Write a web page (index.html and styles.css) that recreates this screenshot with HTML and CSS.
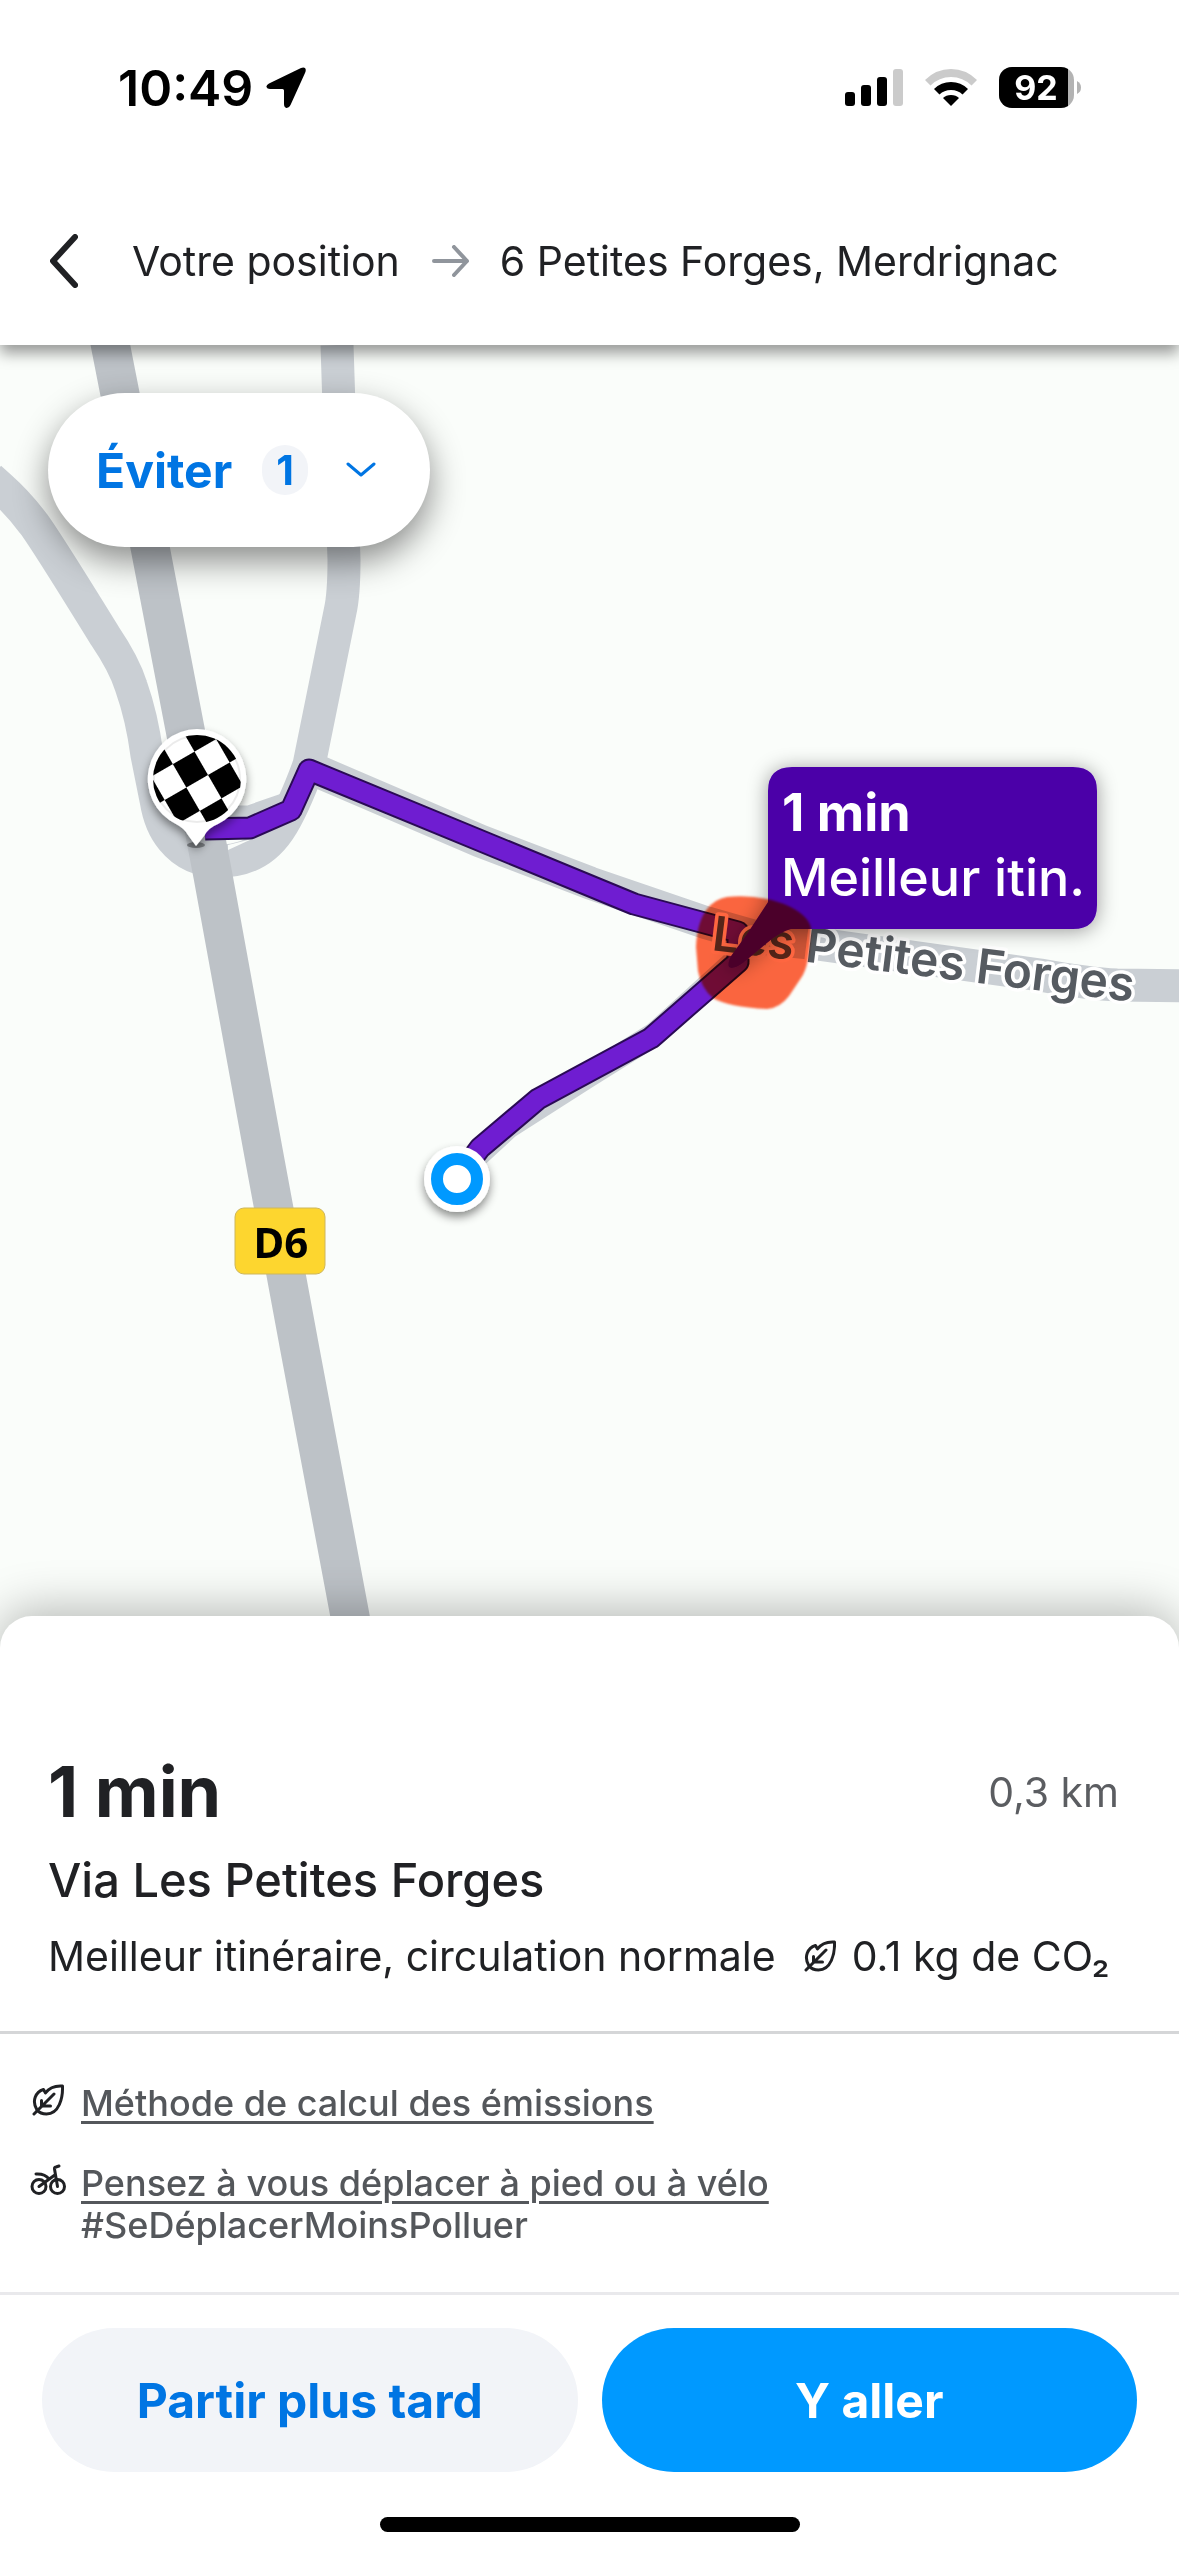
FILE: index.html
```html
<!DOCTYPE html>
<html lang="fr">
<head>
    <meta charset="UTF-8">
    <meta name="viewport" content="width=device-width, initial-scale=1.0">
    <title>Itinéraire - 6 Petites Forges, Merdrignac</title>
    <link rel="stylesheet" href="styles.css">
</head>
<body>
    <!-- Shared icons -->
    <svg class="icon-defs" aria-hidden="true">
        <symbol id="leaf" viewBox="0 0 32 32">
            <g fill="none" stroke="currentColor" stroke-width="3" stroke-linecap="round" stroke-linejoin="round">
                <path d="M2 30 L22 10 M9.500 16.500 V22.500 M10 22 H18.500"/>
                <path d="M5 26 C-.5 17 3.500 8 11.500 5.500 L13.500 9 C17 4 23 1.500 30.500 2 C31 14 27 30 14.500 30 C11 30 7.500 29 5 26 Z"/>
            </g>
        </symbol>
        <symbol id="bike" viewBox="0 0 36 32">
            <g fill="none" stroke="currentColor" stroke-width="3" stroke-linecap="round" stroke-linejoin="round">
                <circle cx="9" cy="22.500" r="7"/>
                <circle cx="27.500" cy="22.500" r="7"/>
                <path d="M9 22.500 L25.500 10.500 M27.500 22.500 L24.500 5 Q24.300 3.500 26 3 L29 2 M6 10 Q15 9.500 19 15"/>
            </g>
        </symbol>
    </svg>

    <header class="header">
        <div class="status-bar">
            <div class="status-time">
                <span>10:49</span>
                <svg width="40" height="42" viewBox="0 0 40 42" aria-hidden="true">
                    <path d="M35 1 L3 16.500 Q0 18 .5 20 Q1 22 4 22 H16.500 Q18 22 18 23.500 V37 Q18 40.500 20.500 41 Q23 41.200 24.500 38 L39 6 Q40.500 2.500 39 1 Q37.500 -.2 35 1 Z"/>
                </svg>
            </div>
            <div class="status-icons">
                <svg width="58" height="38" viewBox="0 0 58 38" aria-hidden="true">
                    <rect x="0" y="23" width="10" height="14" rx="3"/>
                    <rect x="16" y="16" width="10" height="21" rx="3"/>
                    <rect x="32" y="8" width="10" height="29" rx="3"/>
                    <rect x="48" y="0" width="10" height="37" rx="3" fill="#cbcbcb"/>
                </svg>
                <svg width="52" height="38" viewBox="0 0 52 38" aria-hidden="true">
                    <path d="M0 11 Q11 0 26 0 Q41 0 52 11 L46.500 16.500 Q38 8 26 8 Q14 8 5.500 16.500 Z" fill="#cbcbcb"/>
                    <path d="M9 20 Q16 13 26 13 Q36 13 43 20 L37.500 25.500 Q33 21 26 21 Q19 21 14.500 25.500 Z"/>
                    <path d="M18 29 Q21 26 26 26 Q31 26 34 29 L26 37 Z"/>
                </svg>
                <svg width="82" height="42" viewBox="0 0 82 42" role="img" aria-label="Batterie 92 %">
                    <clipPath id="level"><rect width="69" height="42"/></clipPath>
                    <rect width="75" height="41" rx="13" fill="#b3b3b3"/>
                    <rect width="75" height="41" rx="13" clip-path="url(#level)"/>
                    <path d="M78 14 Q82 16 82 20.500 Q82 25 78 27 Z" fill="#b3b3b3"/>
                    <text x="37" y="33" class="battery-text">92</text>
                </svg>
            </div>
        </div>
        <nav class="route-bar">
            <button class="back" aria-label="Retour">
                <svg width="28" height="54" viewBox="0 0 28 54" aria-hidden="true">
                    <path d="M25 3 L3 27 L25 51" fill="none" stroke="#202124" stroke-width="6" stroke-linecap="round" stroke-linejoin="round"/>
                </svg>
            </button>
            <span>Votre position</span>
            <svg class="route-arrow" width="38" height="32" viewBox="0 0 38 32" aria-hidden="true">
                <path d="M2 16 H35 M22 2 L35 16 L22 30" fill="none" stroke="#90959c" stroke-width="4" stroke-linecap="round" stroke-linejoin="round"/>
            </svg>
            <span>6 Petites Forges, Merdrignac</span>
        </nav>
    </header>

    <main class="map">
        <svg class="map-canvas" viewBox="0 345 1179 1315" preserveAspectRatio="xMidYMid slice">
            <defs>
                <pattern id="checker" width="50" height="54" patternUnits="userSpaceOnUse" patternTransform="translate(208 775) rotate(-30)">
                    <rect width="50" height="54" fill="#fff"/>
                    <rect width="25" height="27"/>
                    <rect x="25" y="27" width="25" height="27"/>
                </pattern>
                <filter id="pin-shadow" x="-30%" y="-30%" width="160%" height="160%">
                    <feDropShadow dx="0" dy="5" stdDeviation="5" flood-opacity=".45"/>
                </filter>
                <filter id="bubble-shadow" x="-20%" y="-30%" width="140%" height="160%">
                    <feDropShadow dx="0" dy="2" stdDeviation="10" flood-opacity=".4"/>
                </filter>
                <filter id="soft"><feGaussianBlur stdDeviation="1"/></filter>
            </defs>

            <!-- Small roads -->
            <g class="road">
                <path d="M-10 478 L0 487 Q18 503 33 523 Q42 534 105 636 Q124 664 131 686 Q142 717 147 755 L156 800 Q160 825 172 839 Q190 861 220 861 Q258 861 279 830 Q293 809 309 765 L340 612 Q344 595 344 560 L337 345"/>
                <path d="M190 822 H250 L290 808"/>
                <path d="M310 768 L480 841 L590 883 L707 923 L760 938 L810 943 L1040 975 Q1090 984 1117 985 L1190 986"/>
                <path class="road-thin" d="M742 955 L655 1034 L586 1077 L508 1127 L470 1162"/>
            </g>
            <path d="M228 845 L252 839 L228 850 Z" fill="#fafdfa"/>
            <!-- D6 -->
            <path class="road-main" d="M109 338 L150 547 L185 729 L213 876 L263 1150 L300 1350 L350 1616 L360 1670"/>

            <!-- Route -->
            <path class="route-edge" d="M205 829 L250 828 L291 810 L309 770 L634 904 L738 932 V962 L651 1038 L538 1099 L480 1148 L457 1179"/>
            <path class="route-line" d="M205 829 L250 828 L291 810 L309 770 L634 904 L738 932 V962 L651 1038 L538 1099 L480 1148 L457 1179"/>

            <text class="road-label" transform="translate(711 950) rotate(7)">Les Petites Forges</text>

            <g>
                <rect x="235" y="1208" width="90" height="66" rx="9" fill="#fdd62f" stroke="#cdb65c"/>
                <text class="road-number" x="281" y="1258">D6</text>
            </g>

            <!-- Best route bubble -->
            <g filter="url(#bubble-shadow)">
                <path class="bubble" d="M792 767 H1073 Q1097 767 1097 791 V905 Q1097 929 1073 929 H791 Q780 932 767 943 L743 963 Q733 970 729 967 Q727 964 731 956 L747 934 L768 902 V791 Q768 767 792 767 Z"/>
            </g>
            <text class="bubble-time" x="782" y="831">1 min</text>
            <text class="bubble-text" x="781" y="896">Meilleur itin.</text>

            <!-- Highlighted junction -->
            <g filter="url(#soft)">
                <path class="junction" id="junction" d="M727 897 Q757 894 784 904 Q808 914 811 928 Q810 966 801 978 L789 996 Q780 1008 767 1009 Q728 1007 713 998 Q701 988 698 971 L696 947 Q697 922 707 909 Q715 899 727 897 Z"/>
            </g>

            <!-- Destination pin -->
            <ellipse cx="196" cy="845" rx="9" ry="3" fill="#4d5054" fill-opacity=".6"/>
            <g filter="url(#pin-shadow)">
                <path d="M197 729 A50 50 0 0 1 218 824 Q208 828 204 836 L196 846 L188 835 Q184 828 176 824 A50 50 0 0 1 197 729 Z" fill="#fff"/>
            </g>
            <circle cx="197" cy="779" r="44" fill="url(#checker)"/>
            <circle cx="197" cy="779" r="43" fill="none" stroke="#000" stroke-opacity=".08" stroke-width="2"/>

            <!-- Current position -->
            <circle cx="457" cy="1179" r="33" fill="#fff" filter="url(#pin-shadow)"/>
            <circle cx="457" cy="1179" r="20" fill="none" stroke="#0099ff" stroke-width="12"/>
        </svg>

        <button class="avoid">
            <span>Éviter</span>
            <span class="avoid-count">1</span>
            <svg width="30" height="16" viewBox="0 0 30 16" aria-hidden="true">
                <path d="M2 2 L15 13 L28 2" fill="none" stroke="currentColor" stroke-width="3" stroke-linecap="round" stroke-linejoin="round"/>
            </svg>
        </button>
    </main>

    <section class="sheet">
        <div class="summary">
            <div class="summary-top">
                <h1>1 min</h1>
                <span class="distance">0,3 km</span>
            </div>
            <h2>Via Les Petites Forges</h2>
            <p class="details">
                <span>Meilleur itinéraire, circulation normale</span>
                <svg class="details-leaf" width="32" height="32" aria-hidden="true"><use href="#leaf"/></svg>
                <span>0.1 kg de CO₂</span>
            </p>
        </div>

        <ul class="tips">
            <li>
                <svg width="36" height="32" aria-hidden="true"><use href="#leaf"/></svg>
                <a href="#emissions">Méthode de calcul des émissions</a>
            </li>
            <li>
                <svg width="36" height="32" aria-hidden="true"><use href="#bike"/></svg>
                <div>
                    <a href="#velo">Pensez à vous déplacer à pied ou à vélo</a>
                    <p>#SeDéplacerMoinsPolluer</p>
                </div>
            </li>
        </ul>

        <footer class="actions">
            <div class="action-buttons">
                <button class="btn btn-later">Partir plus tard</button>
                <button class="btn btn-go">Y aller</button>
            </div>
            <div class="home-indicator"></div>
        </footer>
    </section>
</body>
</html>
```

FILE: styles.css
```css
* {
    margin: 0;
    padding: 0;
    box-sizing: border-box;
}

:root {
    --blue: #0099ff;
    --link-blue: #0075e3;
    --text: #202124;
    --text-light: #5b5d61;
    --route: #6f1dd1;
}

body {
    min-height: 100vh;
    display: flex;
    flex-direction: column;
    background-color: white;
    color: var(--text);
    font-family: Inter, 'Liberation Sans', sans-serif;
    font-size: 41px;
}

button {
    border: none;
    background: none;
    font-family: inherit;
    cursor: pointer;
}

svg {
    display: block;
    flex-shrink: 0;
}

.icon-defs {
    position: absolute;
    width: 0;
    height: 0;
}

/* Header */
.header {
    position: relative;
    z-index: 2;
    background-color: white;
    box-shadow: 0 8px 14px rgba(0, 0, 0, 0.4);
}

.status-bar {
    height: 176px;
    padding: 0 98px 0 118px;
    display: flex;
    justify-content: space-between;
    align-items: center;
    color: black;
}

.status-time {
    display: flex;
    align-items: center;
    gap: 13px;
    font-size: 50px;
    font-weight: 600;
}

.status-icons {
    display: flex;
    align-items: center;
    gap: 22px;
}

.battery-text {
    fill: white;
    font-size: 34px;
    font-weight: 700;
    text-anchor: middle;
}

.route-bar {
    height: 169px;
    padding: 0 50px;
    display: flex;
    align-items: center;
    white-space: nowrap;
}

.back {
    margin-right: 54px;
}

.route-arrow {
    margin: 0 30px 0 32px;
}

/* Map */
.map {
    position: relative;
    flex: 1;
    min-height: 600px;
    margin-bottom: -44px;
    overflow: hidden;
    background-color: #fafdfa;
}

.map-canvas {
    position: absolute;
    width: 100%;
    height: 100%;
}

.road path {
    fill: none;
    stroke: #cacfd4;
    stroke-width: 33;
}

.road .road-thin {
    stroke-width: 24;
}

.road-main {
    fill: none;
    stroke: #bdc2c7;
    stroke-width: 39;
}

.route-edge,
.route-line {
    fill: none;
    stroke-linejoin: round;
}

.route-edge {
    stroke: #2a0a55;
    stroke-width: 23;
}

.route-line {
    stroke: var(--route);
    stroke-width: 19;
}

.road-label {
    fill: #565b61;
    stroke: white;
    stroke-width: 7;
    stroke-linejoin: round;
    paint-order: stroke;
    font-size: 48px;
    font-weight: 600;
}

.road-number {
    font-family: 'Noto Sans', sans-serif;
    font-size: 42px;
    font-weight: 700;
    text-anchor: middle;
}

.bubble {
    fill: #4c00a8;
}

.bubble-time,
.bubble-text {
    fill: white;
    font-size: 52px;
}

.bubble-time {
    font-weight: 700;
}

.bubble-text {
    font-weight: 500;
}

.junction {
    fill: #ff6641;
}

.map-canvas g:has(.junction) {
    mix-blend-mode: multiply;
}

.avoid {
    position: absolute;
    top: 48px;
    left: 48px;
    height: 154px;
    padding: 0 54px 0 48px;
    display: flex;
    align-items: center;
    border-radius: 77px;
    background-color: white;
    box-shadow: 0 14px 34px rgba(0, 0, 0, 0.45);
    color: var(--link-blue);
    font-size: 48px;
    font-weight: 700;
}

.avoid-count {
    width: 46px;
    height: 50px;
    margin: 0 38px 0 30px;
    border-radius: 23px;
    background-color: #f2f4f8;
    font-size: 41px;
    line-height: 50px;
    text-align: center;
}

/* Bottom sheet */
.sheet {
    position: relative;
    z-index: 1;
    border-radius: 32px 32px 0 0;
    background-color: white;
    box-shadow: 0 -6px 48px rgba(0, 0, 0, 0.28);
}

.summary {
    padding: 134px 60px 45px 48px;
    display: flex;
    flex-direction: column;
    gap: 16px;
    border-bottom: 3px solid #d5d6d8;
    line-height: 60px;
}

.summary-top {
    display: flex;
    justify-content: space-between;
    align-items: center;
    line-height: 84px;
}

h1 {
    font-size: 70px;
    font-weight: 700;
}

h2 {
    font-size: 47px;
    font-weight: 500;
}

.distance {
    color: var(--text-light);
}

.details {
    display: flex;
    align-items: center;
    white-space: nowrap;
}

.details-leaf {
    margin: 0 16px 0 28px;
}

.tips {
    padding: 48px 30px 46px;
    display: flex;
    flex-direction: column;
    gap: 38px;
    list-style: none;
    color: #54575b;
    font-size: 36px;
    font-weight: 500;
    line-height: 42px;
}

.tips li {
    display: flex;
    align-items: flex-start;
    gap: 15px;
}

.tips svg {
    margin-top: 2px;
    color: var(--text);
}

.tips a {
    display: block;
    color: inherit;
    text-decoration-thickness: 3px;
    text-underline-offset: 5px;
}

.actions {
    padding: 33px 42px 24px;
    border-top: 3px solid #e9e9ec;
}

.action-buttons {
    display: grid;
    grid-template-columns: 1fr 1fr;
    gap: 24px;
}

.btn {
    height: 144px;
    border-radius: 72px;
    font-size: 48px;
    font-weight: 700;
}

.btn-later {
    background-color: #f2f4f8;
    color: var(--link-blue);
}

.btn-go {
    background-color: var(--blue);
    color: white;
}

.home-indicator {
    width: 420px;
    max-width: 60%;
    height: 15px;
    margin: 45px auto 0;
    border-radius: 8px;
    background-color: black;
}
```
